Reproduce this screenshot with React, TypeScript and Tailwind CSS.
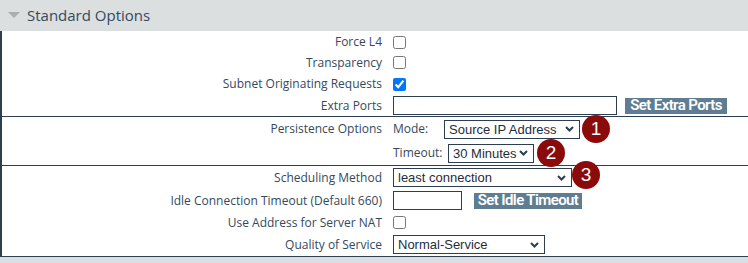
import React from "react";

const label = "text-right text-[12px] text-[#34495e] leading-none flex items-center justify-end";
const ctrlFont = "font-['Liberation_Sans',Arial,sans-serif]";

function Badge({ n }: { n: number }) {
  return (
    <span className={`inline-flex items-center justify-center w-[28px] h-[28px] -my-[5px] rounded-full bg-[#8b0a0a] text-white text-[19px] ${ctrlFont} leading-none shrink-0`}>
      {n}
    </span>
  );
}

function Chevron() {
  return (
    <svg width="9" height="6" viewBox="0 0 9 6" className="shrink-0">
      <path d="M1 1 L4.5 4.5 L8 1" fill="none" stroke="#2c3e50" strokeWidth="2" />
    </svg>
  );
}

function Select({ value, w }: { value: string; w: string }) {
  return (
    <div
      role="combobox"
      className={`${w} h-[19px] border border-[#2c3e50] bg-white flex items-center justify-between pl-[4px] pr-[5px] text-[13px] leading-none text-[#1f2d3a] ${ctrlFont} shrink-0`}
    >
      <span className="whitespace-nowrap">{value}</span>
      <Chevron />
    </div>
  );
}

function Btn({ children, w }: { children: React.ReactNode; w: string }) {
  return (
    <button className={`${w} h-[16px] bg-[#5f7d92] text-white text-[15px] font-semibold tracking-[-0.6px] leading-none font-['Roboto',Arial,sans-serif] whitespace-nowrap shrink-0`}>
      {children}
    </button>
  );
}

function Check({ checked }: { checked?: boolean }) {
  return <input type="checkbox" defaultChecked={checked} className="w-[13px] h-[13px] m-0" />;
}

export default function App() {
  return (
    <div className="w-[748px] h-[263px] bg-white font-['Open_Sans',sans-serif] overflow-hidden">
      {/* header */}
      <div className="h-[31px] bg-[#dcdfe0] flex items-center pl-[8px]">
        <svg width="12" height="7" viewBox="0 0 12 7" className="mr-[7px]">
          <path d="M0 0 H12 L6 6 Z" fill="#a9b0b4" />
        </svg>
        <span className="text-[15px] text-[#34495e]">Standard Options</span>
      </div>

      <div className="border-l-2 border-[#2c3e50]">
        {/* general */}
        <div className="grid grid-cols-[380px_1fr] gap-x-[11px] pt-[1px] border-b border-[#2c3e50]">
          <div className={`${label} h-[20px]`}>Force L4</div>
          <div className="h-[20px] flex items-center"><Check /></div>
          <div className={`${label} h-[21px]`}>Transparency</div>
          <div className="h-[21px] flex items-center"><Check /></div>
          <div className={`${label} h-[22px]`}>Subnet Originating Requests</div>
          <div className="h-[22px] flex items-center"><Check checked /></div>
          <div className={`${label} h-[21px]`}>Extra Ports</div>
          <div className="h-[21px] flex items-center gap-[8px]">
            <input type="text" className="w-[224px] h-[19px] border border-[#2c3e50] bg-white" />
            <Btn w="w-[102px]">Set Extra Ports</Btn>
          </div>
        </div>

        {/* persistence */}
        <div className="grid grid-cols-[380px_1fr] gap-x-[11px] border-b border-[#2c3e50]">
          <div className={`${label} h-[24px]`}>Persistence Options</div>
          <div className="h-[24px] flex items-center">
            <span className="w-[51px] text-[12px] text-[#34495e]">Mode:</span>
            <Select value="Source IP Address" w="w-[136px]" />
            <span className="ml-[2px]"><Badge n={1} /></span>
          </div>
          <div className="h-[24px]" />
          <div className="h-[24px] flex items-center">
            <span className="w-[55px] text-[12px] text-[#34495e]">Timeout:</span>
            <Select value="30 Minutes" w="w-[86px]" />
            <span className="ml-[3px]"><Badge n={2} /></span>
          </div>
        </div>

        {/* scheduling */}
        <div className="grid grid-cols-[380px_1fr] gap-x-[11px] border-b border-[#2c3e50]">
          <div className={`${label} h-[23px]`}>Scheduling Method</div>
          <div className="h-[23px] flex items-center">
            <Select value="least connection" w="w-[179px]" />
            <span className="-mt-[5px]"><Badge n={3} /></span>
          </div>
          <div className={`${label} h-[23px]`}>Idle Connection Timeout (Default 660)</div>
          <div className="h-[23px] flex items-center gap-[12px]">
            <input type="text" className="w-[69px] h-[19px] border border-[#2c3e50] bg-white" />
            <Btn w="w-[108px]">Set Idle Timeout</Btn>
          </div>
          <div className={`${label} h-[21px]`}>Use Address for Server NAT</div>
          <div className="h-[21px] flex items-center"><Check /></div>
          <div className={`${label} h-[23px]`}>Quality of Service</div>
          <div className="h-[23px] flex items-center">
            <Select value="Normal-Service" w="w-[152px]" />
          </div>
        </div>
      </div>
      <div className="h-[6px] bg-[#dcdfe0]" />
    </div>
  );
}
